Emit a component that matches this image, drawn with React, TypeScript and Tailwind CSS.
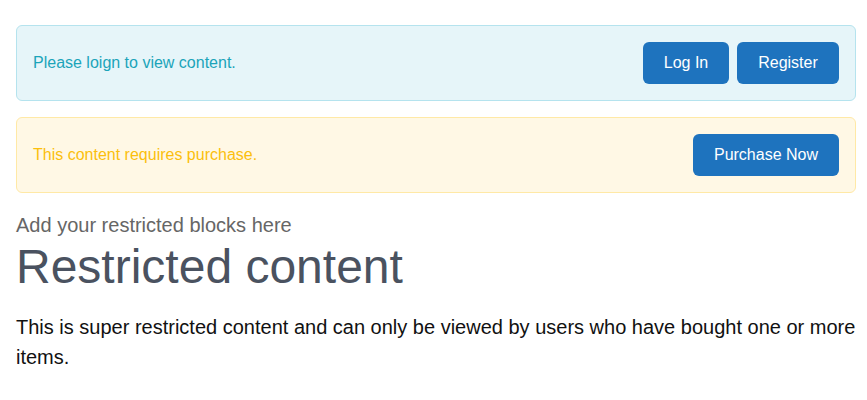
export default function App() {
  return (
    <div className="bg-white pt-[25px] pb-6 font-['Liberation_Sans',Arial,sans-serif]">
      <div className="ml-4 w-[840px]">
        <div className="flex items-center justify-between rounded-md border border-[#b5e3ee] bg-[#e6f5f9] px-4 py-4">
          <p className="text-base text-[#1ba4b9]">Please loign to view content.</p>
          <div className="flex gap-2">
            <button type="button" className="h-[42px] w-[86px] rounded-md bg-[#1e73be] text-base text-white">
              Log In
            </button>
            <button type="button" className="h-[42px] w-[102px] rounded-md bg-[#1e73be] text-base text-white">
              Register
            </button>
          </div>
        </div>

        <div className="mt-4 flex items-center justify-between rounded-md border border-[#ffe9a6] bg-[#fff8e5] px-4 py-4">
          <p className="text-base text-[#fbbf0d]">This content requires purchase.</p>
          <button type="button" className="h-[42px] w-[146px] rounded-md bg-[#1e73be] text-base text-white">
            Purchase Now
          </button>
        </div>

        <p className="mt-[20px] text-xl leading-6 text-[#666666]">Add your restricted blocks here</p>
        <h1 className="mt-[2px] text-[48px] leading-[56px] text-[#4a5260]">Restricted content</h1>
        <p className="mt-[17px] text-xl leading-[30px] text-[#111111]">
          This is super restricted content and can only be viewed by users who have bought one or more items.
        </p>
      </div>
    </div>
  )
}
